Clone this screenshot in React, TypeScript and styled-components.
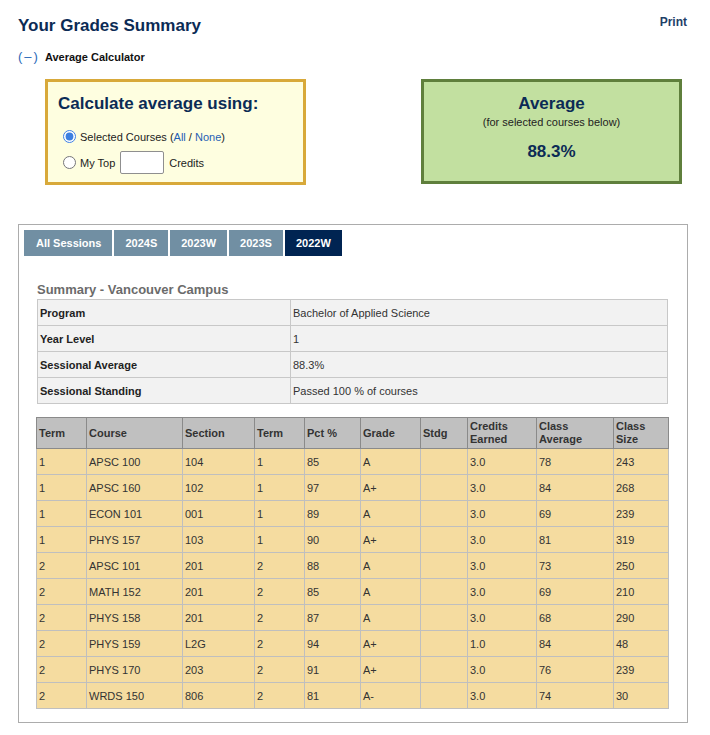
import React from 'react'
import styled, { createGlobalStyle } from 'styled-components'

const GlobalStyle = createGlobalStyle`
  body {
    margin: 0;
    background: #fff;
    font-family: 'Liberation Sans', Arial, sans-serif;
    color: #222;
  }
`

interface GradeRow {
  term: string
  course: string
  section: string
  sessionTerm: string
  pct: string
  grade: string
  standing: string
  credits: string
  classAvg: string
  classSize: string
}

const grades: GradeRow[] = [
  { term: '1', course: 'APSC 100', section: '104', sessionTerm: '1', pct: '85', grade: 'A', standing: '', credits: '3.0', classAvg: '78', classSize: '243' },
  { term: '1', course: 'APSC 160', section: '102', sessionTerm: '1', pct: '97', grade: 'A+', standing: '', credits: '3.0', classAvg: '84', classSize: '268' },
  { term: '1', course: 'ECON 101', section: '001', sessionTerm: '1', pct: '89', grade: 'A', standing: '', credits: '3.0', classAvg: '69', classSize: '239' },
  { term: '1', course: 'PHYS 157', section: '103', sessionTerm: '1', pct: '90', grade: 'A+', standing: '', credits: '3.0', classAvg: '81', classSize: '319' },
  { term: '2', course: 'APSC 101', section: '201', sessionTerm: '2', pct: '88', grade: 'A', standing: '', credits: '3.0', classAvg: '73', classSize: '250' },
  { term: '2', course: 'MATH 152', section: '201', sessionTerm: '2', pct: '85', grade: 'A', standing: '', credits: '3.0', classAvg: '69', classSize: '210' },
  { term: '2', course: 'PHYS 158', section: '201', sessionTerm: '2', pct: '87', grade: 'A', standing: '', credits: '3.0', classAvg: '68', classSize: '290' },
  { term: '2', course: 'PHYS 159', section: 'L2G', sessionTerm: '2', pct: '94', grade: 'A+', standing: '', credits: '1.0', classAvg: '84', classSize: '48' },
  { term: '2', course: 'PHYS 170', section: '203', sessionTerm: '2', pct: '91', grade: 'A+', standing: '', credits: '3.0', classAvg: '76', classSize: '239' },
  { term: '2', course: 'WRDS 150', section: '806', sessionTerm: '2', pct: '81', grade: 'A-', standing: '', credits: '3.0', classAvg: '74', classSize: '30' },
]

const columns = [
  { label: 'Term', width: 50 },
  { label: 'Course', width: 96 },
  { label: 'Section', width: 72 },
  { label: 'Term', width: 50 },
  { label: 'Pct %', width: 56 },
  { label: 'Grade', width: 60 },
  { label: 'Stdg', width: 47 },
  { label: 'Credits Earned', width: 69 },
  { label: 'Class Average', width: 77 },
  { label: 'Class Size', width: 55 },
]

const summary = [
  ['Program', 'Bachelor of Applied Science'],
  ['Year Level', '1'],
  ['Sessional Average', '88.3%'],
  ['Sessional Standing', 'Passed 100 % of courses'],
]

const sessions = ['All Sessions', '2024S', '2023W', '2023S', '2022W']

const App: React.FC = () => {
  return (
    <>
      <GlobalStyle />
      <StyledPage>
        <StyledHeader>
          <StyledTitle>Your Grades Summary</StyledTitle>
          <StyledPrint href="#">Print</StyledPrint>
        </StyledHeader>

        <StyledToggleRow>
          <StyledToggle>(&ndash;)</StyledToggle>
          <span>Average Calculator</span>
        </StyledToggleRow>

        <StyledBoxes>
          <StyledCalcBox>
            <StyledCalcTitle>Calculate average using:</StyledCalcTitle>
            <StyledOptions>
              <StyledOption>
                <input type="radio" name="mode" defaultChecked />
                <span>
                  Selected Courses (<StyledLink href="#">All</StyledLink> / <StyledLink href="#">None</StyledLink>)
                </span>
              </StyledOption>
              <StyledOption>
                <input type="radio" name="mode" />
                <span>My Top</span>
                <StyledCreditInput type="text" />
                <span>Credits</span>
              </StyledOption>
            </StyledOptions>
          </StyledCalcBox>

          <StyledAverageBox>
            <StyledAverageTitle>Average</StyledAverageTitle>
            <StyledAverageNote>(for selected courses below)</StyledAverageNote>
            <StyledAverageValue>88.3%</StyledAverageValue>
          </StyledAverageBox>
        </StyledBoxes>

        <StyledPanel>
          <StyledTabs>
            {sessions.map(s => (
              <StyledTab key={s} active={s === '2022W'}>
                {s}
              </StyledTab>
            ))}
          </StyledTabs>

          <StyledContent>
            <StyledSummaryHeading>Summary - Vancouver Campus</StyledSummaryHeading>
            <StyledSummaryTable>
              <colgroup>
                <col style={{ width: 253 }} />
                <col />
              </colgroup>
              <tbody>
                {summary.map(([label, value]) => (
                  <tr key={label}>
                    <StyledSummaryLabel>{label}</StyledSummaryLabel>
                    <StyledSummaryValue>{value}</StyledSummaryValue>
                  </tr>
                ))}
              </tbody>
            </StyledSummaryTable>

            <StyledGradesTable>
              <colgroup>
                {columns.map((c, i) => (
                  <col key={i} style={{ width: c.width }} />
                ))}
              </colgroup>
              <thead>
                <tr>
                  {columns.map((c, i) => (
                    <StyledHeadCell key={i}>{c.label}</StyledHeadCell>
                  ))}
                </tr>
              </thead>
              <tbody>
                {grades.map(g => (
                  <tr key={g.course}>
                    <StyledCell>{g.term}</StyledCell>
                    <StyledCell>{g.course}</StyledCell>
                    <StyledCell>{g.section}</StyledCell>
                    <StyledCell>{g.sessionTerm}</StyledCell>
                    <StyledCell>{g.pct}</StyledCell>
                    <StyledCell>{g.grade}</StyledCell>
                    <StyledCell>{g.standing}</StyledCell>
                    <StyledCell>{g.credits}</StyledCell>
                    <StyledCell>{g.classAvg}</StyledCell>
                    <StyledCell>{g.classSize}</StyledCell>
                  </tr>
                ))}
              </tbody>
            </StyledGradesTable>
          </StyledContent>
        </StyledPanel>
      </StyledPage>
    </>
  )
}

const StyledPage = styled.div`
  width: 670px;
  padding: 14px 0 13px 18px;
`

const StyledHeader = styled.div`
  display: flex;
  justify-content: space-between;
  align-items: flex-start;
`

const StyledTitle = styled.h1`
  margin: 0;
  font-size: 17px;
  font-weight: 700;
  line-height: 24px;
  color: #0b2b55;
`

const StyledPrint = styled.a`
  margin: 0 1px 0 0;
  font-size: 12px;
  font-weight: 700;
  line-height: 16px;
  color: #1f4068;
  text-decoration: none;
`

const StyledToggleRow = styled.div`
  display: flex;
  align-items: center;
  gap: 5px;
  margin-top: 11px;
  font-size: 11px;
  font-weight: 700;
  color: #111;
`

const StyledToggle = styled.span`
  font-size: 13px;
  font-weight: 400;
  color: #2a68b8;
  letter-spacing: 2px;
`

const StyledBoxes = styled.div`
  display: flex;
  justify-content: space-between;
  align-items: flex-start;
  margin-top: 15px;
  padding: 0 6px 0 27px;
`

const StyledCalcBox = styled.div`
  box-sizing: border-box;
  width: 261px;
  height: 106px;
  border: 3px solid #d8a93a;
  background: #fefee0;
  padding: 12px 10px 0 10px;
`

const StyledCalcTitle = styled.h2`
  margin: 0;
  font-size: 17px;
  font-weight: 700;
  line-height: 20px;
  color: #0b2b55;
`

const StyledOptions = styled.div`
  margin-top: 16px;
  padding-left: 5px;
  display: flex;
  flex-direction: column;
  gap: 8px;
`

const StyledOption = styled.label`
  display: flex;
  align-items: center;
  gap: 4px;
  font-size: 11px;
  color: #222;

  input[type='radio'] {
    margin: 0;
    width: 13px;
    height: 13px;
    accent-color: #3d7fe0;
  }
`

const StyledLink = styled.a`
  color: #1f5fb5;
  text-decoration: none;
`

const StyledCreditInput = styled.input`
  box-sizing: border-box;
  width: 44px;
  height: 23px;
  margin: 0 1px;
  border: 1px solid #8f8f8f;
  border-radius: 2px;
  background: #fff;
`

const StyledAverageBox = styled.div`
  box-sizing: border-box;
  width: 261px;
  height: 105px;
  border: 3px solid #5f7f3c;
  background: #c2e0a0;
  display: flex;
  flex-direction: column;
  align-items: center;
  padding-top: 12px;
  color: #0b2b55;
`

const StyledAverageTitle = styled.div`
  font-size: 17px;
  font-weight: 700;
  line-height: 20px;
`

const StyledAverageNote = styled.div`
  font-size: 11px;
  color: #222;
  line-height: 14px;
  margin-top: 1px;
`

const StyledAverageValue = styled.div`
  font-size: 17px;
  font-weight: 700;
  line-height: 20px;
  margin-top: 13px;
`

const StyledPanel = styled.div`
  margin-top: 39px;
  border: 1px solid #acacac;
  padding: 5px 5px 13px 5px;
`

const StyledTabs = styled.div`
  display: flex;
  gap: 2px;
`

const StyledTab = styled.div<{ active?: boolean }>`
  height: 26px;
  padding: 0 11px;
  display: flex;
  align-items: center;
  font-size: 11px;
  font-weight: 700;
  color: #fff;
  background: ${({ active }) => (active ? '#002452' : '#718fa3')};
  &:first-child {
    padding: 0 11px 0 12px;
  }
`

const StyledContent = styled.div`
  padding: 25px 13px 0 12px;
`

const StyledSummaryHeading = styled.h3`
  margin: 0 0 0 1px;
  font-size: 13px;
  font-weight: 700;
  line-height: 18px;
  color: #6b6b6b;
`

const StyledSummaryTable = styled.table`
  width: 631px;
  margin-left: 1px;
  border-collapse: collapse;
  table-layout: fixed;
  font-size: 11px;
`

const StyledSummaryLabel = styled.th`
  height: 25px;
  padding: 0 2px;
  text-align: left;
  font-weight: 700;
  color: #222;
  background: #f2f2f2;
  border: 1px solid #c8c8c8;
`

const StyledSummaryValue = styled.td`
  height: 25px;
  padding: 0 2px;
  color: #333;
  background: #f2f2f2;
  border: 1px solid #c8c8c8;
`

const StyledGradesTable = styled.table`
  width: 632px;
  margin-top: 13px;
  border-collapse: collapse;
  table-layout: fixed;
  font-size: 11px;
`

const StyledHeadCell = styled.th`
  height: 30px;
  padding: 0 2px;
  text-align: left;
  vertical-align: middle;
  font-weight: 700;
  line-height: 13px;
  color: #333;
  background: #c0c0c0;
  border: 1px solid #8a8a8a;
`

const StyledCell = styled.td`
  height: 25px;
  padding: 0 2px;
  color: #333;
  background: #f5dca0;
  border: 1px solid #bfbfbf;
`

export default App
